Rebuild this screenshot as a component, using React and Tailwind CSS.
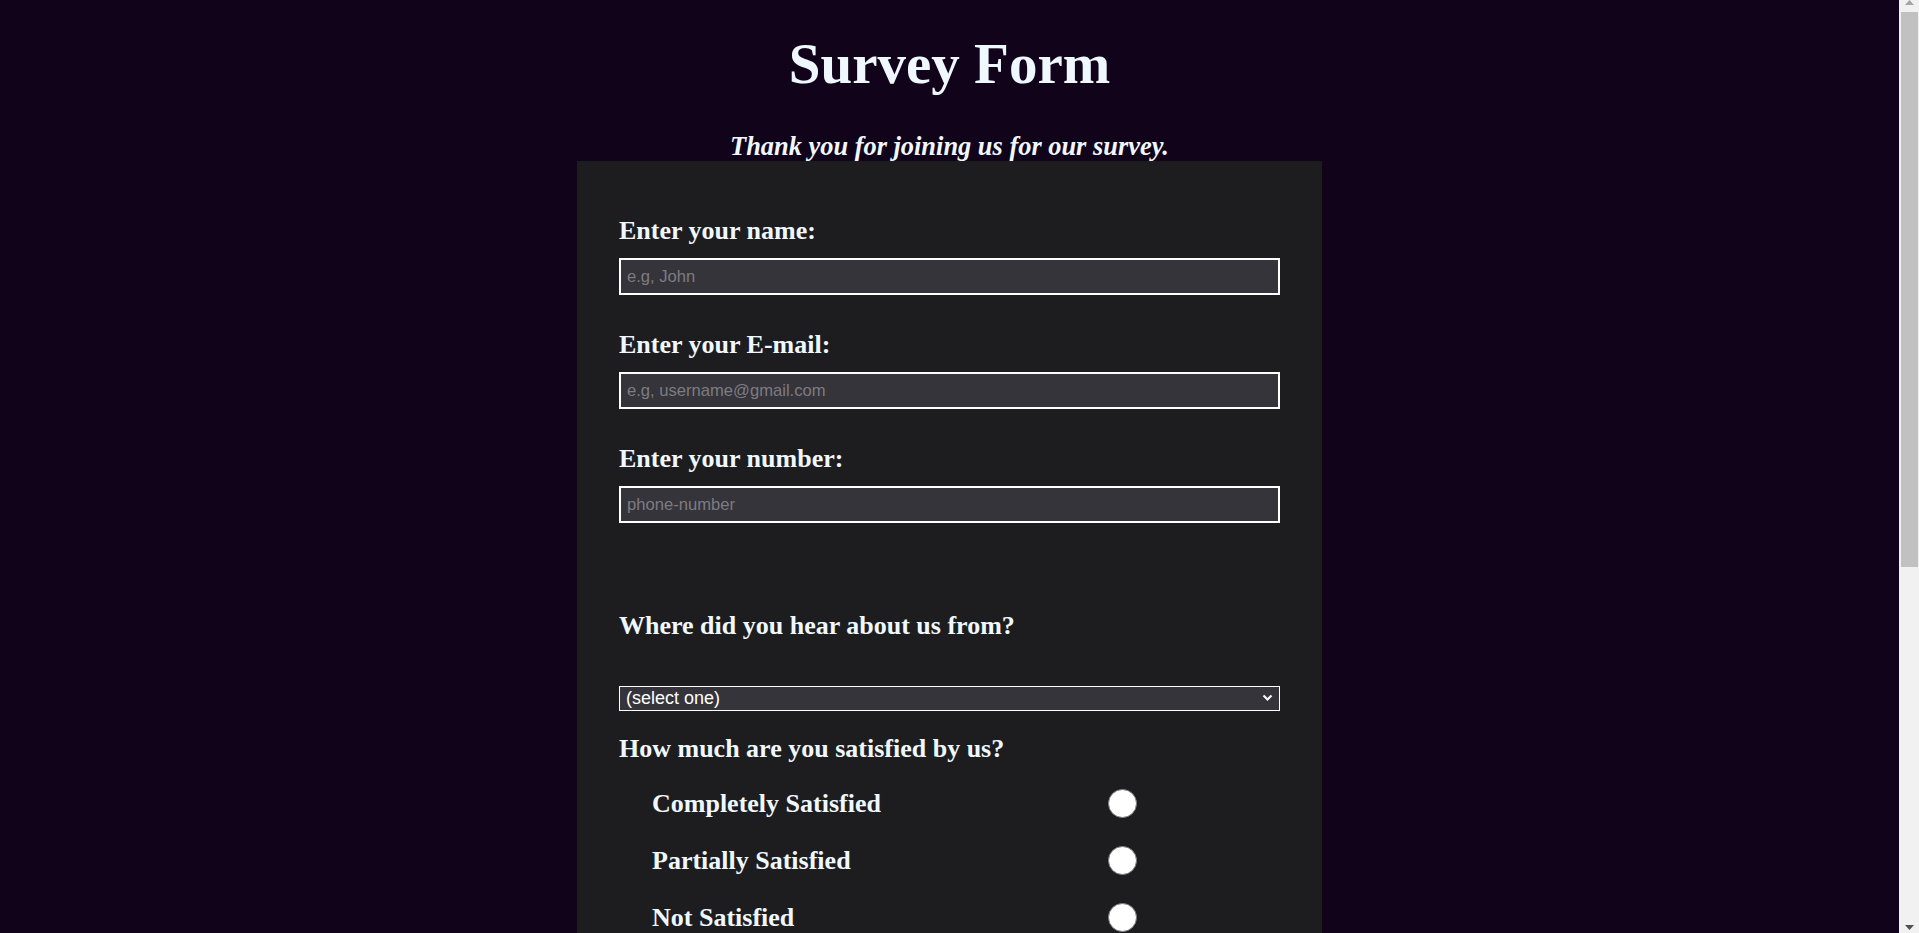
import { useState } from 'react';

const serif = "font-['Liberation_Serif','Times_New_Roman',serif]";
const sans = "font-['Liberation_Sans',Arial,sans-serif]";

const textFields = [
  { id: 'name', label: 'Enter your name:', type: 'text', placeholder: 'e.g, John' },
  { id: 'email', label: 'Enter your E-mail:', type: 'email', placeholder: 'e.g, username@gmail.com' },
  { id: 'number', label: 'Enter your number:', type: 'tel', placeholder: 'phone-number' },
];

const satisfaction = ['Completely Satisfied', 'Partially Satisfied', 'Not Satisfied'];
const recommend = ['Definitely', 'Maybe', 'Not sure'];
const improvements = ['Front-end Projects', 'Back-end Projects', 'Data Visualization', 'Challenges', 'Open Source Community', 'Gitter help rooms', 'Videos', 'City Meetups', 'Wiki', 'Forum', 'Additional Courses'];

const RadioRow = ({ name, label, checked, onChange }) => (
  <label className="flex items-center h-[29px] pl-[33px]">
    <span className="w-[456px] text-[26px] font-bold leading-[29px]">{label}</span>
    <input
      type="radio"
      name={name}
      checked={checked}
      onChange={onChange}
      className="appearance-none w-[29px] h-[29px] rounded-full bg-white border border-[#7a7a7a] checked:border-[9px] checked:border-[#3b82f6]"
    />
  </label>
);

// classic scrollbar drawn at the right edge, as in the screenshot
const ScrollBar = () => (
  <div className="flex h-screen w-[20px] shrink-0 flex-col bg-[#f1f1f1]">
    <div className="flex h-[12px] justify-center">
      <svg width="9" height="5" viewBox="0 0 9 5"><polygon points="4.5,0 9,5 0,5" fill="#a3a3a3" /></svg>
    </div>
    <div className="ml-[2px] mr-[1px] h-[555px] bg-[#c1c1c1]" />
    <div className="flex-1" />
    <div className="flex h-[17px] justify-center pt-[9px]">
      <svg width="9" height="5" viewBox="0 0 9 5"><polygon points="0,0 9,0 4.5,5" fill="#505050" /></svg>
    </div>
  </div>
);

export default function App() {
  const [source, setSource] = useState('');
  const [satisfied, setSatisfied] = useState('');
  const [recommends, setRecommends] = useState('');

  return (
    <div className="flex h-screen overflow-hidden bg-[#10031a]">
      <div className={`h-screen flex-1 overflow-y-auto [scrollbar-width:none] text-[#f0f8ff] ${serif}`}>
        <h1 className="pt-[32px] text-center text-[57px] font-bold leading-[63px]">Survey Form</h1>
        <p className="mt-[37px] text-center text-[26.4px] font-bold italic leading-[29px]">
          Thank you for joining us for our survey.
        </p>

        <form className="mx-auto w-[745px] bg-[#1d1d1f] px-[42px] pt-[55px] pb-[80px]" onSubmit={e => e.preventDefault()}>
          <div className="flex flex-col gap-[35px]">
            {textFields.map(f => (
              <div key={f.id} className="flex flex-col gap-[13px]">
                <label htmlFor={f.id} className="text-[26px] font-bold leading-[29px]">{f.label}</label>
                <input
                  id={f.id}
                  type={f.type}
                  placeholder={f.placeholder}
                  className={`h-[37px] w-full border-2 border-white bg-[#35343a] px-[6px] text-[16.6px] text-white placeholder:text-[#7d7c82] outline-none ${sans}`}
                />
              </div>
            ))}
          </div>

          <p className="mt-[88px] text-[26px] font-bold leading-[29px]">Where did you hear about us from?</p>
          <div className="relative mt-[46px]">
            <select
              value={source}
              onChange={e => setSource(e.target.value)}
              className={`block h-[25px] w-full appearance-none border border-white bg-[#35343a] pl-[6px] text-[18px] leading-[21px] text-white outline-none ${sans}`}
            >
              <option value="">(select one)</option>
              <option value="friend">Friend</option>
              <option value="social">Social media</option>
              <option value="search">Search engine</option>
              <option value="other">Other</option>
            </select>
            <svg className="pointer-events-none absolute right-[7px] top-[8px]" width="11" height="8" viewBox="0 0 11 8" fill="none">
              <polyline points="1.5,1.5 5.5,5.5 9.5,1.5" stroke="#f0f8ff" strokeWidth="2.2" />
            </svg>
          </div>

          <p className="mt-[23px] text-[26px] font-bold leading-[29px]">How much are you satisfied by us?</p>
          <div className="mt-[26px] flex flex-col gap-[28px]">
            {satisfaction.map(s => (
              <RadioRow key={s} name="satisfaction" label={s} checked={satisfied === s} onChange={() => setSatisfied(s)} />
            ))}
          </div>

          <p className="mt-[60px] text-[26px] font-bold leading-[29px]">Would you recommend us to a friend?</p>
          <div className="mt-[26px] flex flex-col gap-[28px]">
            {recommend.map(r => (
              <RadioRow key={r} name="recommend" label={r} checked={recommends === r} onChange={() => setRecommends(r)} />
            ))}
          </div>

          <p className="mt-[60px] text-[26px] font-bold leading-[29px]">What would you like to see improved?</p>
          <div className="mt-[26px] flex flex-col gap-[28px]">
            {improvements.map(i => (
              <label key={i} className="flex items-center h-[29px] pl-[33px]">
                <span className="w-[456px] text-[26px] font-bold leading-[29px]">{i}</span>
                <input type="checkbox" className="w-[24px] h-[24px] accent-[#3b82f6]" />
              </label>
            ))}
          </div>

          <p className="mt-[60px] text-[26px] font-bold leading-[29px]">Any comments or suggestions?</p>
          <textarea
            rows={8}
            placeholder="Enter your comment here..."
            className={`mt-[13px] block w-full border-2 border-white bg-[#35343a] p-[6px] text-[16.6px] text-white placeholder:text-[#7d7c82] outline-none ${sans}`}
          />

          <button
            type="submit"
            className="mt-[50px] block w-full h-[48px] bg-[#3b82f6] text-[24px] font-bold text-white"
          >
            Submit
          </button>
        </form>
        <div className="h-[200px]" />
      </div>
      <ScrollBar />
    </div>
  );
}
